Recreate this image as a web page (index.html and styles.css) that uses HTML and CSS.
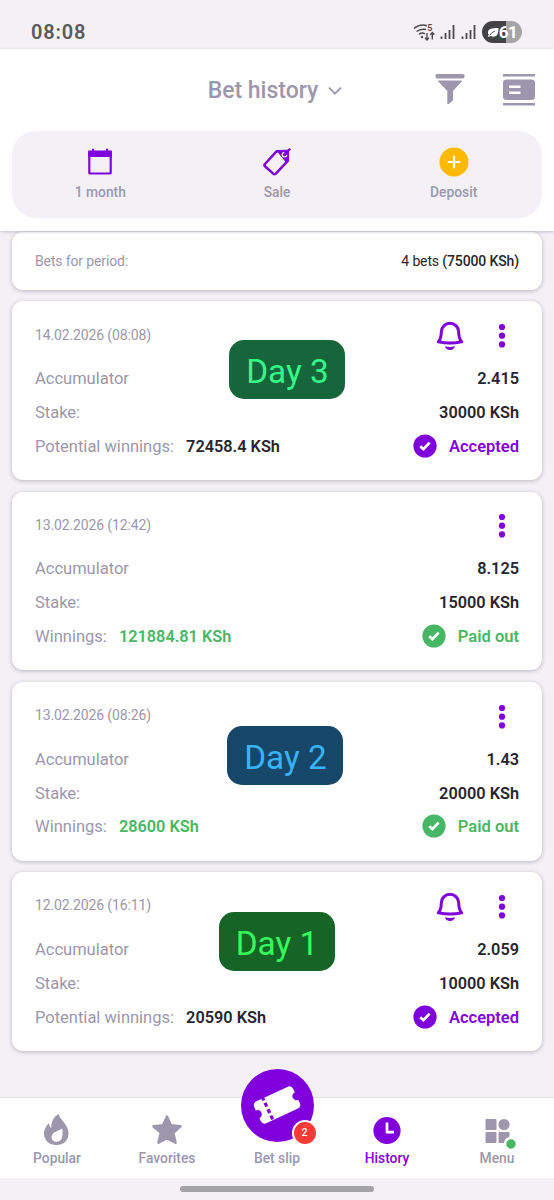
FILE: index.html
```html
<!DOCTYPE html>
<html lang="en">
<head>
    <meta charset="utf-8">
    <title>Bet history</title>
    <link rel="stylesheet" href="styles.css">
</head>
<body>
    <svg class="defs" width="0" height="0">
        <symbol id="bell" viewBox="0 0 28 30">
            <path d="M2.300 20.800C5 18 5.300 16 5.300 11a8.700 8.700 0 0 1 17.400 0c0 5 .3 7 3 9.800q-11.700 2.400-23.400 0z" fill="none" stroke="currentColor" stroke-width="3" stroke-linejoin="round"/>
            <path d="M9 25.300q5 1.200 10 0c-.5 2.400-2.300 3.700-5 3.700s-4.500-1.300-5-3.700z" fill="currentColor"/>
        </symbol>
        <symbol id="dots" viewBox="0 0 8 26">
            <circle cx="4" cy="4" r="3.1"/>
            <circle cx="4" cy="12.700" r="3.1"/>
            <circle cx="4" cy="21.400" r="3.1"/>
        </symbol>
        <symbol id="check" viewBox="0 0 24 24">
            <circle cx="12" cy="12" r="11.600" fill="currentColor"/>
            <path d="M7.300 12.200l3.100 3 6.200-6.600" fill="none" stroke="#fff" stroke-width="2.700"/>
        </symbol>
    </svg>

    <div class="statusbar">
        <span class="time">08:08</span>
        <div class="status-icons">
            <svg width="22" height="20" viewBox="0 0 22 20" fill="none" stroke="#4b4a4d" stroke-width="1.500">
                <path d="M0 6.500q6-5 13-2.800M2.500 9.500q4.500-3.300 9.500-2M5 12.300q3-2.200 6-.4"/>
                <circle cx="8" cy="15" r="1.200" fill="#4b4a4d" stroke="none"/>
                <path d="M13 11v7m-2-2.200l2 2.200 2-2.200M18.300 17.500v-7m-2 2.200l2-2.200 2 2.200" stroke-width="1.400"/>
                <text x="13.300" y="8.500" class="wifi-num">5</text>
            </svg>
            <svg class="signal" width="15" height="16" viewBox="0 0 15 16"><path d="M1.500 15v-2.500M5.500 15v-6M9.500 15v-9M13.500 15v-14"/></svg>
            <svg class="signal signal2" width="15" height="16" viewBox="0 0 15 16"><path d="M1.500 15v-2.500M5.500 15v-6M9.500 15v-9M13.500 15v-14"/></svg>
            <div class="battery">
                <svg width="12" height="13" viewBox="0 0 13 13"><path d="M1 7C1 2 5 1.500 12.500 1.500c0 6-1.500 9.500-6 9.500-1.500 0-2.500-.4-3.200-1L2 11.500.8 10.600 2 9Q1 8 1 7z" fill="#fff"/><path d="M3 9.500q2-3.500 5.500-4.500" fill="none" stroke="#434244"/></svg>
                <span>61</span>
            </div>
        </div>
    </div>

    <header class="header">
        <div class="title-row">
            <div class="title">
                <span>Bet history</span>
                <svg width="14" height="9" viewBox="0 0 14 9"><path d="M1 1.700l6 6 6-6" fill="none" stroke="#9c97ac" stroke-width="1.800"/></svg>
            </div>
            <div class="title-actions">
                <svg width="30" height="32" viewBox="0 0 30 32" fill="#9c97ac">
                    <rect x=".5" y="0" width="29" height="4.500" rx="1.800"/>
                    <path d="M3.500 6.500h23q1 0 .2 1L18 17v9.500l-4 3.300q-1.700.7-1.700-.8V17L3.300 7.500q-.7-1 .2-1z"/>
                </svg>
                <svg width="32" height="32" viewBox="0 0 32 32">
                    <path d="M0 1.200h32M0 30.200h32" stroke="#9c97ac" stroke-width="2.600"/>
                    <rect x="0" y="5.500" width="32" height="20.500" rx="3.500" fill="#9c97ac"/>
                    <path d="M6 12.700h11.500M6 18.700h11.500" stroke="#fff" stroke-width="2.600"/>
                </svg>
            </div>
        </div>
        <div class="actions">
            <div class="action">
                <svg width="30" height="30" viewBox="0 0 30 30">
                    <path d="M4.300 4.500h21.400v21.200q0 .8-.8.800H5.100q-.8 0-.8-.8z" fill="none" stroke="#7f00dd" stroke-width="2.200"/>
                    <path d="M3.200 4.500h23.600V10H3.200zM7 1.700h2.200V5H7zM21 1.700h2.200V5H21z" fill="#7f00dd"/>
                </svg>
                <span>1 month</span>
            </div>
            <div class="action">
                <svg width="30" height="30" viewBox="0 0 30 30">
                    <path d="M3 17L14.500 4.300l10.500-.3.800 9.800-12 12.900q-1.300 1.200-2.600 0L3 19.300q-1.200-1.100 0-2.300z" fill="none" stroke="#7f00dd" stroke-width="2.500" stroke-linejoin="round"/>
                    <path d="M14.300 3.500l10.700-.6 2-1.700q2-.4 1.800 1.600L27 4.500v9.300l-2.500 2.500z" fill="#7f00dd"/>
                    <path d="M22.300 5.300a2.300 2.300 0 1 0 2.500 2.800" fill="none" stroke="#f3f1f5" stroke-width="1.300"/>
                </svg>
                <span>Sale</span>
            </div>
            <div class="action">
                <svg width="30" height="30" viewBox="0 0 30 30">
                    <circle cx="15" cy="15" r="14.500" fill="#ffb900"/>
                    <path d="M15 8.800v12.400M8.800 15h12.400" stroke="#fff" stroke-width="2.200"/>
                </svg>
                <span>Deposit</span>
            </div>
        </div>
    </header>

    <main class="list">
        <div class="summary">
            <span class="label">Bets for period:</span>
            <span>4 bets <b>(75000 KSh)</b></span>
        </div>

        <div class="card">
            <div class="card-top">
                <span>14.02.2026 (08:08)</span>
                <div class="card-icons">
                    <svg class="bell" width="28" height="30"><use href="#bell"/></svg>
                    <svg class="dots" width="8" height="26"><use href="#dots"/></svg>
                </div>
            </div>
            <div class="row"><span>Accumulator</span><b>2.415</b></div>
            <div class="row"><span>Stake:</span><b>30000 KSh</b></div>
            <div class="row">
                <span>Potential winnings: <b>72458.4 KSh</b></span>
                <div class="status accepted"><svg width="24" height="24"><use href="#check"/></svg>Accepted</div>
            </div>
            <div class="day day3">Day 3</div>
        </div>

        <div class="card">
            <div class="card-top">
                <span>13.02.2026 (12:42)</span>
                <div class="card-icons">
                    <svg class="dots" width="8" height="26"><use href="#dots"/></svg>
                </div>
            </div>
            <div class="row"><span>Accumulator</span><b>8.125</b></div>
            <div class="row"><span>Stake:</span><b>15000 KSh</b></div>
            <div class="row">
                <span>Winnings: <b class="won">121884.81 KSh</b></span>
                <div class="status paid"><svg width="24" height="24"><use href="#check"/></svg>Paid out</div>
            </div>
        </div>

        <div class="card">
            <div class="card-top">
                <span>13.02.2026 (08:26)</span>
                <div class="card-icons">
                    <svg class="dots" width="8" height="26"><use href="#dots"/></svg>
                </div>
            </div>
            <div class="row"><span>Accumulator</span><b>1.43</b></div>
            <div class="row"><span>Stake:</span><b>20000 KSh</b></div>
            <div class="row">
                <span>Winnings: <b class="won">28600 KSh</b></span>
                <div class="status paid"><svg width="24" height="24"><use href="#check"/></svg>Paid out</div>
            </div>
            <div class="day day2">Day 2</div>
        </div>

        <div class="card">
            <div class="card-top">
                <span>12.02.2026 (16:11)</span>
                <div class="card-icons">
                    <svg class="bell" width="28" height="30"><use href="#bell"/></svg>
                    <svg class="dots" width="8" height="26"><use href="#dots"/></svg>
                </div>
            </div>
            <div class="row"><span>Accumulator</span><b>2.059</b></div>
            <div class="row"><span>Stake:</span><b>10000 KSh</b></div>
            <div class="row">
                <span>Potential winnings: <b>20590 KSh</b></span>
                <div class="status accepted"><svg width="24" height="24"><use href="#check"/></svg>Accepted</div>
            </div>
            <div class="day day1">Day 1</div>
        </div>
    </main>

    <nav class="nav">
        <div class="nav-item">
            <svg width="32" height="34" viewBox="0 0 32 34">
                <path d="M17.800 1c.8 6 9.700 10 9.700 19.200C27.500 27.500 22.500 32 15.500 32S3 27.500 3 20.500c0-4 2-7.500 5-10.500.2 2.500.8 4 2.300 5C10.300 9 12 4 17.800 1z" fill="#9c97ac"/>
                <path d="M21.300 15.500c-2.500 2.500-10.800 3-10.800 8.500 0 3 2 4.800 5 4.800 5.500 0 6.800-5.300 5.800-13.300z" fill="#fff"/>
            </svg>
            <span>Popular</span>
        </div>
        <div class="nav-item">
            <svg width="32" height="34" viewBox="0 0 32 34">
                <path d="M16 3.700l3.900 8.500 9.600 1-7.300 6.700 2.300 9.800L16 25.200l-8.500 4.500 2.300-9.800-7.300-6.700 9.600-1z" fill="#9c97ac" stroke="#9c97ac" stroke-width="2.600" stroke-linejoin="round"/>
            </svg>
            <span>Favorites</span>
        </div>
        <div class="nav-item">
            <div class="slip">
                <svg width="48" height="42" viewBox="0 0 48 42">
                    <g transform="rotate(-25 24 21)">
                        <path d="M7 9h34q4.500 0 4.500 4.500V17a4.200 4.200 0 0 0 0 8.400V29q0 4-4.500 4H7q-4.500 0-4.500-4v-3.600a4.200 4.200 0 0 0 0-8.400v-3.500Q2.500 9 7 9z" fill="#fff"/>
                        <path d="M14 7v28" stroke="#7f00dd" stroke-width="3.200" stroke-dasharray="4.200 2.800"/>
                    </g>
                </svg>
                <span class="badge">2</span>
            </div>
            <span>Bet slip</span>
        </div>
        <div class="nav-item active">
            <svg width="32" height="34" viewBox="0 0 32 34">
                <circle cx="16" cy="17.500" r="13.600" fill="#7f00dd"/>
                <path d="M16 9.500v9.700h7" fill="none" stroke="#fff" stroke-width="2.700"/>
            </svg>
            <span>History</span>
        </div>
        <div class="nav-item">
            <svg class="menu-icon" width="32" height="34" viewBox="0 0 32 34" fill="#9c97ac">
                <rect x="4.500" y="6" width="11" height="11" rx="1"/>
                <circle cx="23" cy="11.500" r="5.600"/>
                <rect x="4.500" y="19" width="11" height="11" rx="1"/>
                <rect x="17.500" y="19" width="11" height="11" rx="1"/>
                <circle cx="30" cy="31" r="6" fill="#48b765" stroke="#fff" stroke-width="2.500"/>
            </svg>
            <span>Menu</span>
        </div>
    </nav>
    <div class="home"><div class="home-bar"></div></div>
</body>
</html>
```
FILE: styles.css
```css
* {
    box-sizing: border-box;
}

body {
    margin: 0;
    height: 1200px;
    display: flex;
    flex-direction: column;
    overflow: hidden;
    background: #f3f1f5;
    font-family: Roboto, sans-serif;
    color: #28242f;
}

b {
    font-weight: 600;
}

svg {
    display: block;
    overflow: visible;
    flex-shrink: 0;
}

.defs {
    position: absolute;
}

/* status bar */
.statusbar {
    height: 49px;
    flex-shrink: 0;
    padding: 14px 32px 0 31px;
    display: flex;
    justify-content: space-between;
}

.time {
    font-size: 20px;
    line-height: 36px;
    font-weight: 600;
    letter-spacing: 0.8px;
    color: #5b5a5d;
}

.status-icons {
    display: flex;
    align-items: center;
    height: 36px;
}

.wifi-num {
    font-size: 9px;
    font-weight: 600;
    fill: #4b4a4d;
    stroke: none;
}

.signal {
    margin-left: 4px;
    fill: none;
    stroke: #4b4a4d;
    stroke-width: 1.8px;
}

.signal2 {
    margin-left: 6px;
}

.battery {
    display: flex;
    align-items: center;
    justify-content: center;
    margin-left: 6px;
    width: 40px;
    height: 22px;
    border-radius: 11px;
    background: linear-gradient(to right, #434244 61%, #a5a4a7 61%);
    color: #fff;
    font-size: 17px;
    font-weight: 700;
    letter-spacing: -0.6px;
}

/* header */
.header {
    height: 182px;
    flex-shrink: 0;
    padding: 0 12px;
    background: #fff;
    box-shadow: 0 1px 3px rgba(90, 50, 110, 0.28);
    position: relative;
    z-index: 1;
}

.title-row {
    height: 82px;
    display: grid;
    grid-template-columns: 1fr auto 1fr;
    align-items: center;
}

.title {
    grid-column: 2;
    display: flex;
    align-items: center;
    gap: 10px;
    padding-right: 4px;
    color: #9c97ac;
    font-size: 23px;
    font-weight: 500;
}

.title-actions {
    display: flex;
    justify-content: flex-end;
    gap: 38px;
    padding-right: 7px;
}

.actions {
    height: 87px;
    border-radius: 24px;
    background: #f3f1f5;
    display: grid;
    grid-template-columns: repeat(3, 1fr);
}

.action {
    display: flex;
    flex-direction: column;
    align-items: center;
    padding-top: 16px;
    gap: 7px;
    color: #9c97ac;
    font-size: 13.8px;
    line-height: 16px;
    font-weight: 500;
}

/* bets */
.list {
    flex: 1;
    padding: 1px 12px 0;
    display: flex;
    flex-direction: column;
    gap: 11.6px;
}

.summary,
.card {
    background: #fff;
    border-radius: 11px;
    box-shadow: 0 1px 4px rgba(50, 40, 60, 0.3);
    padding: 0 23px;
}

.summary {
    height: 57.7px;
    display: flex;
    align-items: center;
    justify-content: space-between;
    font-size: 14px;
    letter-spacing: -0.13px;
}

.summary b {
    font-weight: 500;
}

.label {
    color: #9c97ac;
}

.card {
    height: 178.7px;
    padding-top: 9px;
    position: relative;
}

.card-top {
    height: 51.5px;
    display: flex;
    align-items: center;
    justify-content: space-between;
    color: #9c97ac;
    font-size: 14px;
    letter-spacing: -0.13px;
}

.card-top > span {
    padding-bottom: 3px;
}

.card-icons {
    display: flex;
    align-items: center;
    gap: 34px;
    padding-right: 13.4px;
    color: #7f00dd;
    fill: #7f00dd;
}

.row {
    height: 33.8px;
    display: flex;
    align-items: center;
    justify-content: space-between;
    color: #9c97ac;
    font-size: 16.5px;
}

.row b {
    color: #28242f;
    font-size: 16.3px;
}

.row span b {
    margin-left: 8px;
}

.row b.won {
    color: #48b765;
}

.status {
    display: flex;
    align-items: center;
    gap: 11.5px;
    font-weight: 600;
}

.status svg {
    margin-top: -1px;
}

.accepted {
    color: #7f00dd;
}

.paid {
    color: #48b765;
}

/* day labels lying over the cards */
.day {
    position: absolute;
    width: 116px;
    height: 59px;
    border-radius: 15px;
    text-align: center;
    font-size: 33.3px;
    line-height: 63px;
}

.day3 {
    left: 217.4px;
    top: 39px;
    background: #16653b;
    color: #34fb88;
}

.day2 {
    left: 215.4px;
    top: 44.5px;
    background: #164768;
    color: #38b3fa;
}

.day1 {
    left: 207px;
    top: 40px;
    background: #166526;
    color: #34fb5b;
}

/* bottom navigation */
.nav {
    height: 81px;
    flex-shrink: 0;
    display: grid;
    grid-template-columns: repeat(5, 1fr);
    grid-template-rows: 100%;
    padding: 0 2px;
    background: #fff;
    border-top: 1px solid #e4e2e6;
}

.nav-item {
    display: flex;
    flex-direction: column;
    align-items: center;
    justify-content: flex-end;
    gap: 3px;
    padding-bottom: 12px;
    color: #9c97ac;
    font-size: 13.8px;
    line-height: 16px;
    font-weight: 500;
}

.active {
    color: #7f00dd;
}

.slip {
    position: relative;
    display: flex;
    align-items: center;
    justify-content: center;
    flex-shrink: 0;
    width: 73px;
    height: 73px;
    margin-bottom: 5.5px;
    border-radius: 50%;
    background: #7f00dd;
}

.badge {
    position: absolute;
    right: -4px;
    bottom: -4px;
    width: 26px;
    height: 26px;
    border: 2.5px solid #fff;
    border-radius: 50%;
    background: #fb3b36;
    color: #fff;
    font-size: 10px;
    line-height: 22px;
    text-align: center;
}

.home {
    height: 22px;
    flex-shrink: 0;
    padding-top: 8px;
}

.home-bar {
    width: 194px;
    height: 6px;
    margin: 0 auto;
    border-radius: 3px;
    background: #a4a3a5;
}
```
